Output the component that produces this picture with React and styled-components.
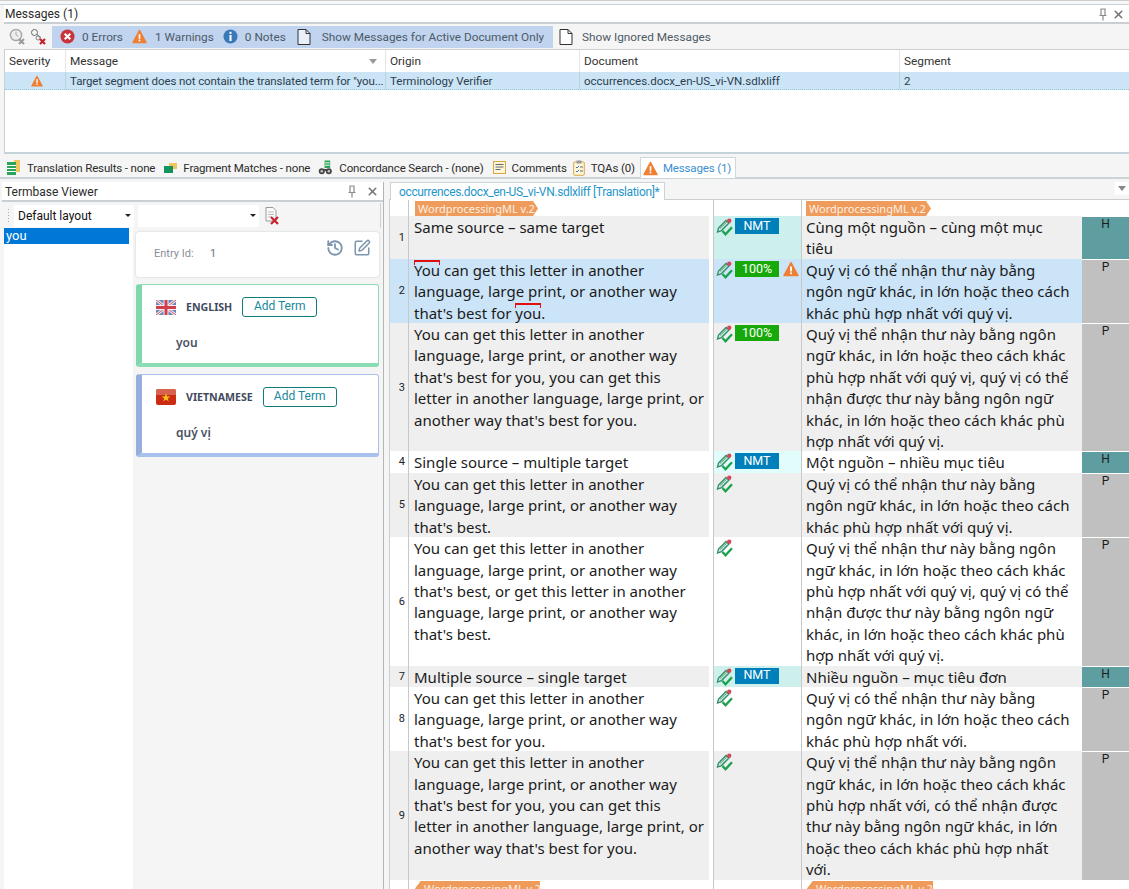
import React from 'react';
import styled, { createGlobalStyle } from 'styled-components';
import { History, SquarePen, X } from 'lucide-react';

const Global = createGlobalStyle`
  html, body { margin: 0; padding: 0; background: #f5f5f5; }
  * { box-sizing: border-box; }
`;

const ui = `Roboto, "Open Sans", sans-serif`;
const ed = `"Noto Sans", "Open Sans", sans-serif`;

const Page = styled.div`
  width: 1129px; height: 889px; overflow: hidden; background: #f5f5f5;
  display: flex; flex-direction: column; font-family: ${ui}; color: #333;
`;
const TopEdge = styled.div`
  height: 5px; flex: none; background: #f7f7f7;
  border-top: 1px solid #cfcfcf; border-bottom: 1px solid #c4d4da;
`;
const PanelTitle = styled.div`
  height: ${p => p.$h || 19}px; flex: none; background: #fff; display: flex; align-items: center;
  padding: 1px 4px 0 ${p => p.$pad || 5}px; font-size: 12px; color: #2b2b2b; border-bottom: 2px solid #c9cfd2; gap: ${p => p.$gap || 4}px;
  margin-left: ${p => p.$ml || 2}px;
`;
const TitleText = styled.span` flex: 1; `;
const Toolbar = styled.div`
  height: 25px; flex: none; display: flex; align-items: center; padding-left: 9px; background: #f5f5f5;
`;
const ToolIcons = styled.div` display: flex; align-items: center; gap: 3px; width: 43px; `;
const ActiveBlock = styled.div`
  height: 22px; width: 501px; background: #c0d3ef; display: flex; align-items: center; padding-left: 8px;
`;
const ToggleItem = styled.div`
  display: flex; align-items: center; gap: ${p => p.$gap || 8}px; margin-right: ${p => p.$mr || 9}px;
  font-size: 11.8px; color: #4e5a66; white-space: nowrap;
`;
const IdleItem = styled(ToggleItem)` margin-left: 6px; gap: 9px; `;
const MessageTable = styled.div`
  height: 105px; flex: none; margin-left: 4px; background: #fff;
  border-top: 1px solid #c9cfd2; border-left: 1px solid #c9cfd2; border-bottom: 2px solid #c4d4da;
`;
const Cols = styled.div`
  display: grid; grid-template-columns: 60px 320px 194px 320px 1fr;
  height: ${p => p.$h}px; background: ${p => p.$bg || '#fff'};
  border-bottom: ${p => p.$line || 'none'};
`;
const HeadCell = styled.div`
  display: flex; align-items: center; justify-content: space-between; padding: 0 8px 0 4px;
  font-size: 11.8px; color: #333; border-left: ${p => p.$first ? 'none' : '1px solid #e6e6e6'};
`;
const BodyCell = styled.div`
  display: flex; align-items: center; justify-content: ${p => p.$center ? 'center' : 'flex-start'};
  padding: 0 0 0 4px; font-size: 11.5px; letter-spacing: ${p => p.$tight ? '-0.1px' : '0'}; color: #2c3e4d; white-space: nowrap; overflow: hidden;
  border-left: ${p => p.$first ? 'none' : '1px solid #b9d3e4'};
`;
const SortArrow = styled.i`
  width: 0; height: 0; border-left: 4px solid transparent; border-right: 4px solid transparent; border-top: 5px solid #9a9a9a;
`;
const DockTabs = styled.div`
  height: 21px; flex: none; margin-top: 4px; display: flex; align-items: center; padding-left: 6px;
  border-bottom: 2px solid #c9d3d8;
`;
const DockTab = styled.div`
  display: flex; align-items: center; gap: 6px; font-size: 11.5px; letter-spacing: -0.15px; color: #2b2b2b; white-space: nowrap;
  margin-right: ${p => p.$mr}px;
`;
const ActiveDockTab = styled(DockTab)`
  height: 21px; background: #fff; border: 1px solid #cfd8dc; border-bottom: none; padding: 0 4px 0 2px;
  color: #3a8fd0; gap: 5px; margin-left: -1px;
`;
const Main = styled.div` flex: 1; min-height: 0; display: flex; padding-top: 3px; `;
const LeftPanel = styled.div`
  width: 384px; flex: none; display: flex; flex-direction: column; border-right: 1px solid #b5b5b5;
`;
const TermToolbar = styled.div`
  height: 25px; flex: none; display: flex; align-items: center; padding: 0 2px 0 7px; margin-top: 1px;
  border-right: 1px solid #d0d0d0;
  margin-right: 2px;
`;
const Grip = styled.div`
  width: 3px; height: 16px; margin-right: 4px;
  background-image: radial-gradient(#aaa 1px, transparent 1px); background-size: 3px 3px;
`;
const Combo = styled.div`
  height: 22px; width: ${p => p.$w}px; background: #fff; display: flex; align-items: center; justify-content: space-between;
  padding: 0 3px 0 4px; margin-right: ${p => p.$mr}px; font-size: 12px; color: #111;
`;
const ComboArrow = styled.i`
  width: 0; height: 0; border-left: 3px solid transparent; border-right: 3px solid transparent; border-top: 3px solid #222;
`;
const TermBody = styled.div` flex: 1; display: flex; min-height: 0; padding-left: 4px; `;
const TermList = styled.div` width: 129px; flex: none; background: #fff; `;
const TermItem = styled.div`
  width: 125px; height: 16px; background: #0078d7; color: #fff; font-size: 13px; line-height: 16px; padding-left: 2px;
`;
const TermDetail = styled.div`
  flex: 1; display: flex; flex-direction: column; gap: 7px; padding: 4px 4px 0 3px;
`;
const EntryCard = styled.div`
  height: 45px; width: 243px; background: #fff; border-radius: 3px; box-shadow: 0 0 2px #c4c4c4;
  display: flex; align-items: center; padding: 0 8px 2px 18px; font-size: 11px; color: #8a8f96;
`;
const EntryLabel = styled.span` width: 56px; `;
const EntryValue = styled.span` flex: 1; color: #6d7680; `;
const EntryTools = styled.div` display: flex; gap: 9px; align-self: flex-start; margin-top: 7px; color: #7b96ad; `;
const LangCard = styled.div`
  width: 243px; height: 83px; background: #fff; border-radius: 3px;
  border: 1px solid ${p => p.$side}; border-left: 6px solid ${p => p.$accent}; border-bottom: 4px solid ${p => p.$side};
  padding: 12px 0 0 14px;
`;
const LangHead = styled.div` display: flex; align-items: center; height: 20px; `;
const LangName = styled.span`
  font-family: ${ed}; font-size: 10.6px; font-weight: 700; color: #3f4a5e; margin: 0 10px;
`;
const AddTerm = styled.button`
  height: 20px; width: ${p => p.$w}px; background: #fff; border: 1px solid #0f7b7b; border-radius: 3px; padding: 0 0 2px;
  font-family: ${ui}; font-size: 12px; color: #16899b;
`;
const TermText = styled.div`
  margin: 17px 0 0 20px; font-family: ${ed}; font-size: 12px; font-weight: 600; color: #4a5262;
`;
const RightPanel = styled.div` flex: 1; min-width: 0; display: flex; flex-direction: column; padding-left: 5px; `;
const DocTabBar = styled.div`
  height: 18px; flex: none; display: flex; justify-content: space-between; padding-left: 1px;
  border-bottom: 1px solid #c9cfd2;
`;
const DocTab = styled.div`
  width: 275px; height: 18px; background: #fff; border: 1px solid #c9d3d8; border-bottom: none; padding: 1px 0 0 8px;
  font-size: 12px; color: #1f96c9; line-height: 17px; white-space: nowrap; letter-spacing: -0.35px; overflow: hidden;
`;
const DropBox = styled.div`
  width: 14px; height: 13px; background: #fff; display: flex; justify-content: center; align-items: center;
`;
const DropTri = styled.i`
  width: 0; height: 0; border-left: 4px solid transparent; border-right: 4px solid transparent; border-top: 5px solid #888;
`;
const Grid = styled.div`
  flex: 1; min-height: 0; background: #fff; border-left: 1px solid #c9cfd2; overflow: hidden;
`;
const Row = styled.div`
  display: grid; grid-template-columns: 19px 300px 5px 88px 280px 1fr;
  font-family: ${ed}; font-size: 15px; line-height: 21.4px; color: #1b1b1b;
`;
const NumCell = styled.div`
  background: ${p => p.$bg}; border-right: 1px solid #c8c8c8; display: flex; align-items: center; justify-content: flex-end;
  padding-right: 3px; font-family: ${ui}; font-size: 11px; color: #222;
`;
const TextCell = styled.div`
  background: ${p => p.$bg}; padding: 1px 0 0 ${p => p.$pl || 5}px; white-space: nowrap; overflow: hidden;
`;
const Line = styled.div`
  &:last-child { margin-bottom: -1px; }
`;
const Mark = styled.span`
  position: relative;
  &::before {
    content: ''; position: absolute; left: 0; right: 0; top: 0; height: 3px;
    border: 1px solid #e01010; border-top-width: 2px; border-bottom: none;
  }
`;
const Gutter = styled.div` background: #fff; border-right: 1px solid #c8c8c8; `;
const StatusCell = styled.div`
  background: ${p => p.$bg}; border-right: 1px solid #c8c8c8; display: flex; align-items: flex-start;
  padding: 2px 0 0 2px; gap: 1px;
`;
const Badge = styled.div`
  width: 44px; height: 16px; background: ${p => p.$bg}; color: #fff; display: flex; align-items: center; justify-content: center;
  font-family: ${ui}; font-size: 12.5px; line-height: 1; margin-right: 3px;
`;
const StateCell = styled.div`
  background: ${p => p.$bg}; text-align: center; font-family: ${ui}; font-size: 12px; line-height: 14px; color: #1c1c1c;
  border-top: 1px solid #fff;
`;
const TagHolder = styled.div` display: flex; align-items: flex-start; padding: 1px 0 0 ${p => p.$pl}px; height: 16px; `;
const Tag = styled.div`
  width: ${p => p.$w}px; height: 15px; background: #ef9b5c; color: #fdf0e3;
  font-family: ${ed}; font-size: 11px; line-height: 15px; padding-left: ${p => p.$flip ? 9 : 3}px; white-space: nowrap; overflow: hidden;
  clip-path: ${p => p.$flip ? 'polygon(6px 0, 100% 0, 100% 100%, 0 100%, 0 8px)' : 'polygon(0 0, calc(100% - 5px) 0, 100% 50%, calc(100% - 5px) 100%, 0 100%)'};
`;

const I = styled.svg` display: block; flex: none; `;

const Warn = ({ s = 15 }) => (
  <I width={s} height={s} viewBox="0 0 16 16">
    <path d="M8 1.5 15 14.5H1Z" fill="#ee7f33" stroke="#ee7f33" strokeWidth="1.4" strokeLinejoin="round" />
    <rect x="7.1" y="5.5" width="1.8" height="5" fill="#fff" />
    <rect x="7.1" y="11.4" width="1.8" height="1.8" fill="#fff" />
  </I>
);
const ErrorIcon = () => (
  <I width="15" height="15" viewBox="0 0 16 16">
    <circle cx="8" cy="8" r="7.5" fill="#c8343a" />
    <path d="M5 5l6 6M11 5l-6 6" stroke="#fff" strokeWidth="2.2" />
  </I>
);
const InfoIcon = () => (
  <I width="15" height="15" viewBox="0 0 16 16">
    <circle cx="8" cy="8" r="7.5" fill="#3a79b8" />
    <rect x="6.9" y="3" width="2.2" height="2.2" fill="#fff" />
    <rect x="6.9" y="6.4" width="2.2" height="6.4" fill="#fff" />
  </I>
);
const DocIcon = ({ fill = '#eaf0fa' }) => (
  <I width="14" height="16" viewBox="0 0 14 16">
    <path d="M1 .5h8l4 4v11H1Z" fill={fill} stroke="#333" />
    <path d="M9 .5v4h4" fill="none" stroke="#333" />
  </I>
);
const ClockX = () => (
  <I width="18" height="18" viewBox="0 0 18 18">
    <circle cx="7" cy="7" r="5.6" fill="#eee" stroke="#a9a9a9" strokeWidth="1.5" />
    <path d="M7 3.5V7l2.3 1.4" fill="none" stroke="#a9a9a9" />
    <path d="M10 11l5 5M15 11l-5 5" stroke="#9a9a9a" strokeWidth="2" />
  </I>
);
const KeyX = () => (
  <I width="18" height="18" viewBox="0 0 18 18">
    <circle cx="4.5" cy="4.5" r="3" fill="none" stroke="#666" />
    <path d="M7 6.5l4 3" stroke="#666" />
    <circle cx="8" cy="10" r="2" fill="none" stroke="#888" />
    <path d="M10 11l5 5M15 11l-5 5" stroke="#c8232c" strokeWidth="2.2" />
  </I>
);
const Pin = () => (
  <I width="10" height="13" viewBox="0 0 10 13">
    <path d="M2.5 1h5M3 1v6M7 1v6M1.5 7.5h7M5 8v4.5" fill="none" stroke="#8a8a8a" strokeWidth="1.2" />
  </I>
);
const Close = () => <X size={13} strokeWidth={3} color="#777" />;
const DocX = () => (
  <I width="16" height="18" viewBox="0 0 16 18">
    <path d="M1 .5h7l3 3V14H1Z" fill="#fafafa" stroke="#999" />
    <path d="M3 5h6M3 7.5h6M3 10h4" stroke="#bbb" />
    <path d="M6 10l7 7M13 10l-7 7" stroke="#c8232c" strokeWidth="2.2" />
  </I>
);
const TrIcon = () => (
  <I width="15" height="16" viewBox="0 0 15 16">
    <rect x="8" y="0" width="6" height="12" fill="#f0c75e" />
    <rect x="1" y="2" width="9" height="13" fill="#2ea45a" />
    <path d="M1 5.5h9M1 8.5h9M1 11.5h9" stroke="#fff" />
  </I>
);
const FmIcon = () => (
  <I width="13" height="12" viewBox="0 0 13 12">
    <rect x="5" y="1" width="8" height="6" fill="#f0c75e" />
    <rect x="0" y="4" width="9" height="7" fill="#12945f" />
  </I>
);
const CsIcon = () => (
  <I width="15" height="16" viewBox="0 0 16 16">
    <rect x="7" y="0" width="6" height="8" fill="#2ea45a" />
    <path d="M7.5 2.5h5M7.5 5h5" stroke="#fff" />
    <circle cx="4" cy="11.5" r="3.2" fill="#444" />
    <circle cx="11.5" cy="11.5" r="3.2" fill="#444" />
    <circle cx="4" cy="11.5" r="1.3" fill="#ccc" />
    <circle cx="11.5" cy="11.5" r="1.3" fill="#ccc" />
    <rect x="6" y="9" width="4" height="2" fill="#444" />
  </I>
);
const CmIcon = () => (
  <I width="13" height="14" viewBox="0 0 13 14">
    <rect x=".5" y=".5" width="12" height="12" fill="#fdf6dc" stroke="#d9a93f" />
    <path d="M2.5 3.5h8M2.5 6h8M2.5 8.5h5" stroke="#666" />
  </I>
);
const TqIcon = () => (
  <I width="12" height="16" viewBox="0 0 12 16">
    <rect x=".7" y="2" width="10.6" height="13.3" rx="1" fill="#fdf6dc" stroke="#d9a93f" />
    <rect x="3.5" y=".5" width="5" height="3" fill="#999" />
    <path d="M3 7l1 1 2-2M3 11l1 1 2-2" fill="none" stroke="#3a79b8" />
    <path d="M7 7h3M7 11h3" stroke="#666" />
  </I>
);
const PenCheck = () => (
  <I width="18" height="18" viewBox="0 0 18 18">
    <path d="M1.5 14 2.5 10 10 2.5l3 2.6L5.5 12.6Z" fill="#cfe9dc" stroke="#2f8f68" strokeWidth="1.3" />
    <path d="M4 10.5 10.8 4M6 11.5l6-6" stroke="#2f8f68" strokeWidth=".8" />
    <circle cx="13.2" cy="2.7" r="2.2" fill="#d9475a" />
    <path d="M6.5 13l3 3.2 6.5-7" fill="none" stroke="#19a24d" strokeWidth="2.3" />
  </I>
);
const FlagUK = () => (
  <I width="20" height="15" viewBox="0 0 20 15">
    <rect width="20" height="15" rx="1.5" fill="#6f86b5" />
    <path d="M0 0l20 15M20 0 0 15" stroke="#e8e8ee" strokeWidth="3" />
    <path d="M0 0l20 15M20 0 0 15" stroke="#d0606a" strokeWidth="1" />
    <path d="M10 0v15M0 7.5h20" stroke="#eef" strokeWidth="5" />
    <path d="M10 0v15M0 7.5h20" stroke="#d0404a" strokeWidth="3" />
  </I>
);
const FlagVN = () => (
  <I width="20" height="16" viewBox="0 0 20 16">
    <rect width="20" height="16" rx="2" fill="#cc2b13" />
    <path d="M0 2a2 2 0 0 1 2-2h16a2 2 0 0 1 2 2v4H0Z" fill="#d9705f" opacity=".8" />
    <path d="M10 4.2l1.1 3.2h3.3l-2.7 2 1 3.2-2.7-2-2.7 2 1-3.2-2.7-2h3.3Z" fill="#f5c518" />
  </I>
);

const rows = [
  { n: 1, bg: '#efefef', st: '#cdf0ec', tg: '#efefef', badge: 'NMT', state: 'H',
    src: ['Same source – same target', ''], tgt: ['Cùng một nguồn – cùng một mục', 'tiêu'] },
  { n: 2, bg: '#cce4f7', st: '#cce4f7', tg: '#cce4f7', badge: '100%', warn: true, state: 'P',
    src: [<><Mark>You</Mark> can get this letter in another</>, 'language, large print, or another way', <>that's best for <Mark>you</Mark>.</>],
    tgt: ['Quý vị có thể nhận thư này bằng', 'ngôn ngữ khác, in lớn hoặc theo cách', 'khác phù hợp nhất với quý vị.'] },
  { n: 3, bg: '#efefef', st: '#efefef', tg: '#efefef', badge: '100%', state: 'P',
    src: ['You can get this letter in another', 'language, large print, or another way', "that's best for you, you can get this", 'letter in another language, large print, or', "another way that's best for you.", ''],
    tgt: ['Quý vị thể nhận thư này bằng ngôn', 'ngữ khác, in lớn hoặc theo cách khác', 'phù hợp nhất với quý vị, quý vị có thể', 'nhận được thư này bằng ngôn ngữ', 'khác, in lớn hoặc theo cách khác phù', 'hợp nhất với quý vị.'] },
  { n: 4, bg: '#fff', st: '#e0fdfb', tg: '#fff', badge: 'NMT', state: 'H',
    src: ['Single source – multiple target'], tgt: ['Một nguồn – nhiều mục tiêu'] },
  { n: 5, bg: '#efefef', st: '#efefef', tg: '#efefef', state: 'P',
    src: ['You can get this letter in another', 'language, large print, or another way', "that's best."],
    tgt: ['Quý vị có thể nhận thư này bằng', 'ngôn ngữ khác, in lớn hoặc theo cách', 'khác phù hợp nhất với quý vị.'] },
  { n: 6, bg: '#fff', st: '#fff', tg: '#fff', state: 'P',
    src: ['You can get this letter in another', 'language, large print, or another way', "that's best, or get this letter in another", 'language, large print, or another way', "that's best.", ''],
    tgt: ['Quý vị thể nhận thư này bằng ngôn', 'ngữ khác, in lớn hoặc theo cách khác', 'phù hợp nhất với quý vị, quý vị có thể', 'nhận được thư này bằng ngôn ngữ', 'khác, in lớn hoặc theo cách khác phù', 'hợp nhất với quý vị.'] },
  { n: 7, bg: '#efefef', st: '#cdf0ec', tg: '#efefef', badge: 'NMT', state: 'H',
    src: ['Multiple source – single target'], tgt: ['Nhiều nguồn – mục tiêu đơn'] },
  { n: 8, bg: '#fff', st: '#fff', tg: '#fff', state: 'P',
    src: ['You can get this letter in another', 'language, large print, or another way', "that's best for you."],
    tgt: ['Quý vị có thể nhận thư này bằng', 'ngôn ngữ khác, in lớn hoặc theo cách', 'khác phù hợp nhất với.'] },
  { n: 9, bg: '#efefef', st: '#efefef', tg: '#efefef', state: 'P',
    src: ['You can get this letter in another', 'language, large print, or another way', "that's best for you, you can get this", 'letter in another language, large print, or', "another way that's best for you.", ''],
    tgt: ['Quý vị thể nhận thư này bằng ngôn', 'ngữ khác, in lớn hoặc theo cách khác', 'phù hợp nhất với, có thể nhận được', 'thư này bằng ngôn ngữ khác, in lớn', 'hoặc theo cách khác phù hợp nhất', 'với.'] },
];

const lines = arr => arr.map((l, i) => <Line key={i}>{l === '' ? '\u00a0' : l}</Line>);

const Segment = ({ r }) => (
  <Row>
    <NumCell $bg={r.bg}>{r.n}</NumCell>
    <TextCell $bg={r.bg}>{lines(r.src)}</TextCell>
    <Gutter />
    <StatusCell $bg={r.st}>
      <PenCheck />
      {r.badge && <Badge $bg={r.badge === 'NMT' ? '#0080bb' : '#17a90a'}>{r.badge}</Badge>}
      {r.warn && <Warn s={16} />}
    </StatusCell>
    <TextCell $bg={r.tg} $pl={4}>{lines(r.tgt)}</TextCell>
    <StateCell $bg={r.state === 'H' ? '#5f9ea0' : '#c0c0c0'}>{r.state}</StateCell>
  </Row>
);

const TagRow = ({ flip }) => (
  <Row>
    <NumCell $bg="#fff" />
    <TagHolder $pl={flip ? 6 : 6}><Tag $w={flip ? 125 : 123} $flip={flip}>WordprocessingML v.2</Tag></TagHolder>
    <Gutter />
    <StatusCell $bg="#fff" />
    <TagHolder $pl={flip ? 5 : 4}><Tag $w={flip ? 126 : 125} $flip={flip}>WordprocessingML v.2</Tag></TagHolder>
    <StateCell $bg="#fff" />
  </Row>
);

export default function App() {
  return (
    <Page>
      <Global />
      <TopEdge />
      <PanelTitle $h={19} $ml={4} $pad={1}>
        <TitleText>Messages (1)</TitleText>
        <Pin /><Close />
      </PanelTitle>
      <Toolbar>
        <ToolIcons><ClockX /><KeyX /></ToolIcons>
        <ActiveBlock>
          <ToggleItem $gap={7}><ErrorIcon />0 Errors</ToggleItem>
          <ToggleItem><Warn />1 Warnings</ToggleItem>
          <ToggleItem $gap={7} $mr={11}><InfoIcon />0 Notes</ToggleItem>
          <ToggleItem $gap={11}><DocIcon />Show Messages for Active Document Only</ToggleItem>
        </ActiveBlock>
        <IdleItem><DocIcon fill="#fff" />Show Ignored Messages</IdleItem>
      </Toolbar>
      <MessageTable>
        <Cols $h={22}>
          <HeadCell $first>Severity</HeadCell>
          <HeadCell>Message<SortArrow /></HeadCell>
          <HeadCell>Origin</HeadCell>
          <HeadCell>Document</HeadCell>
          <HeadCell>Segment</HeadCell>
        </Cols>
        <Cols $h={18} $bg="#cbe4f6" $line="1px dotted #9cc3de">
          <BodyCell $first $center><Warn s={12} /></BodyCell>
          <BodyCell $tight>Target segment does not contain the translated term for "you...</BodyCell>
          <BodyCell>Terminology Verifier</BodyCell>
          <BodyCell>occurrences.docx_en-US_vi-VN.sdlxliff</BodyCell>
          <BodyCell>2</BodyCell>
        </Cols>
      </MessageTable>
      <DockTabs>
        <DockTab $mr={9}><TrIcon />Translation Results - none</DockTab>
        <DockTab $mr={8}><FmIcon />Fragment Matches - none</DockTab>
        <DockTab $mr={9}><CsIcon />Concordance Search - (none)</DockTab>
        <DockTab $mr={6}><CmIcon />Comments</DockTab>
        <DockTab $mr={6}><TqIcon />TQAs (0)</DockTab>
        <ActiveDockTab $mr={0}><Warn />Messages (1)</ActiveDockTab>
      </DockTabs>
      <Main>
        <LeftPanel>
          <PanelTitle $h={20} $ml={2} $pad={3} $gap={9}>
            <TitleText>Termbase Viewer</TitleText>
            <Pin /><Close />
          </PanelTitle>
          <TermToolbar>
            <Grip />
            <Combo $w={120} $mr={4}>Default layout<ComboArrow /></Combo>
            <Combo $w={121} $mr={6}><span /><ComboArrow /></Combo>
            <DocX />
          </TermToolbar>
          <TermBody>
            <TermList><TermItem>you</TermItem></TermList>
            <TermDetail>
              <EntryCard>
                <EntryLabel>Entry Id:</EntryLabel>
                <EntryValue>1</EntryValue>
                <EntryTools><History size={18} strokeWidth={2.4} /><SquarePen size={18} strokeWidth={2} /></EntryTools>
              </EntryCard>
              <LangCard $accent="#7fd8ad" $side="#8adcb4">
                <LangHead><FlagUK /><LangName>ENGLISH</LangName><AddTerm $w={75}>Add Term</AddTerm></LangHead>
                <TermText>you</TermText>
              </LangCard>
              <LangCard $accent="#97aedd" $side="#a9c0ec">
                <LangHead><FlagVN /><LangName>VIETNAMESE</LangName><AddTerm $w={74}>Add Term</AddTerm></LangHead>
                <TermText>quý vị</TermText>
              </LangCard>
            </TermDetail>
          </TermBody>
        </LeftPanel>
        <RightPanel>
          <DocTabBar>
            <DocTab>occurrences.docx_en-US_vi-VN.sdlxliff [Translation]*</DocTab>
            <DropBox><DropTri /></DropBox>
          </DocTabBar>
          <Grid>
            <TagRow />
            {rows.map(r => <Segment key={r.n} r={r} />)}
            <TagRow flip />
          </Grid>
        </RightPanel>
      </Main>
    </Page>
  );
}
